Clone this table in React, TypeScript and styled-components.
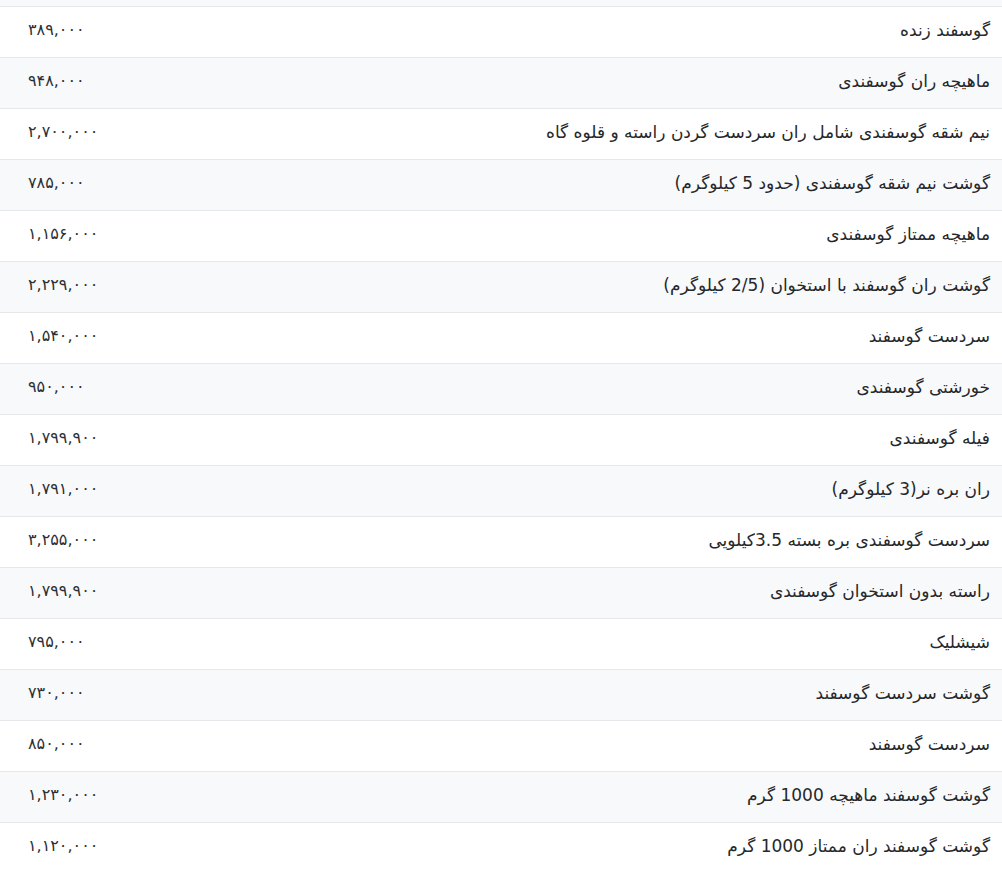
import styled, { createGlobalStyle } from "styled-components";

const GlobalStyle = createGlobalStyle`
  body {
    margin: 0;
    background: #ffffff;
    font-family: "DejaVu Sans", "Noto Sans", sans-serif;
  }
`;

const Viewport = styled.div`
  height: 870px;
  overflow: hidden;
`;

const Table = styled.table`
  direction: rtl;
  width: 100%;
  border-collapse: collapse;
  margin-top: -45px;
  color: #25282b;
  font-size: 17px;
`;

const Row = styled.tr`
  height: 51px;
  border-bottom: 1px solid #e6e8eb;

  &:nth-child(odd) {
    background-color: #f8f9fb;
  }
`;

const NameCell = styled.td`
  text-align: right;
  padding: 0 12px 3px 8px;
  white-space: nowrap;
`;

const PriceCell = styled.td`
  text-align: left;
  padding: 0 8px 5px 28px;
  white-space: nowrap;
  font-size: 16px;
  color: #2b2f33;
`;

type Item = {
  name: string;
  price: string;
};

const items: Item[] = [
  { name: "", price: "" },
  { name: "گوسفند زنده", price: "۳۸۹,۰۰۰" },
  { name: "ماهیچه ران گوسفندی", price: "۹۴۸,۰۰۰" },
  { name: "نیم شقه گوسفندی شامل ران سردست گردن راسته و قلوه گاه", price: "۲,۷۰۰,۰۰۰" },
  { name: "گوشت نیم شقه گوسفندی (حدود 5 کیلوگرم)", price: "۷۸۵,۰۰۰" },
  { name: "ماهیچه ممتاز گوسفندی", price: "۱,۱۵۶,۰۰۰" },
  { name: "گوشت ران گوسفند با استخوان (2/5 کیلوگرم)", price: "۲,۲۲۹,۰۰۰" },
  { name: "سردست گوسفند", price: "۱,۵۴۰,۰۰۰" },
  { name: "خورشتی گوسفندی", price: "۹۵۰,۰۰۰" },
  { name: "فیله گوسفندی", price: "۱,۷۹۹,۹۰۰" },
  { name: "ران بره نر(3 کیلوگرم)", price: "۱,۷۹۱,۰۰۰" },
  { name: "سردست گوسفندی بره بسته 3.5کیلویی", price: "۳,۲۵۵,۰۰۰" },
  { name: "راسته بدون استخوان گوسفندی", price: "۱,۷۹۹,۹۰۰" },
  { name: "شیشلیک", price: "۷۹۵,۰۰۰" },
  { name: "گوشت سردست گوسفند", price: "۷۳۰,۰۰۰" },
  { name: "سردست گوسفند", price: "۸۵۰,۰۰۰" },
  { name: "گوشت گوسفند ماهیچه 1000 گرم", price: "۱,۲۳۰,۰۰۰" },
  { name: "گوشت گوسفند ران ممتاز 1000 گرم", price: "۱,۱۲۰,۰۰۰" },
];

const App = () => {
  return (
    <Viewport>
      <GlobalStyle />
      <Table>
        <tbody>
          {items.map((item, i) => (
            <Row key={i}>
              <NameCell>{item.name}</NameCell>
              <PriceCell>{item.price}</PriceCell>
            </Row>
          ))}
        </tbody>
      </Table>
    </Viewport>
  );
};

export default App;
